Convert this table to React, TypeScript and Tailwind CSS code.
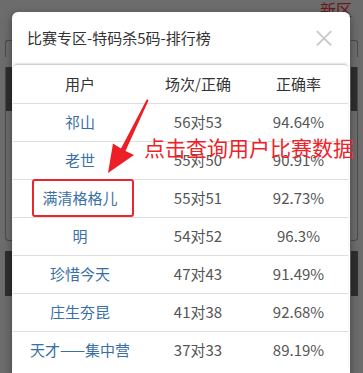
import React from 'react';

interface Rank {
  name: string;
  record: string;
  rate: string;
}

const ranks: Rank[] = [
  { name: '祁山', record: '56对53', rate: '94.64%' },
  { name: '老世', record: '55对50', rate: '90.91%' },
  { name: '满清格格儿', record: '55对51', rate: '92.73%' },
  { name: '明', record: '54对52', rate: '96.3%' },
  { name: '珍惜今天', record: '47对43', rate: '91.49%' },
  { name: '庄生夯昆', record: '41对38', rate: '92.68%' },
  { name: '天才——集中营', record: '37对33', rate: '89.19%' },
];

const font = { fontFamily: '"Noto Sans CJK SC", "Liberation Sans", sans-serif' };

const SideStrip: React.FC<{ side: 'left' | 'right' }> = ({ side }) => (
  <div className={`flex flex-col w-[12px] pt-[40px] ${side === 'left' ? 'pl-[5px]' : 'pr-[5px]'}`}>
    <div className={`h-[17px] border-t border-[#4a4a4a] ${side === 'left' ? 'border-l rounded-tl-[3px]' : 'border-r rounded-tr-[3px]'}`} />
    <div className={`mt-[10px] h-[174px] flex flex-col border-b border-[#4a4a4a] ${side === 'left' ? 'border-l rounded-bl-[4px]' : 'border-r rounded-br-[4px]'}`}>
      <div className="h-[44px] bg-[#2e2e2e]" />
    </div>
    <div className="mt-[10px] h-[45px] bg-[#2e2e2e]" />
  </div>
);

export default function App() {
  return (
    <div className="relative w-[363px] h-[373px] overflow-hidden bg-[#6c6c6c]" style={font}>
      {/* backdrop page */}
      <div className="flex justify-between h-full">
        <SideStrip side="left" />
        <SideStrip side="right" />
      </div>
      <div className="absolute left-[320px] top-[1px] text-[16px] text-[#6a1818] leading-none">新区</div>

      {/* modal */}
      <div className="absolute left-[12px] top-[12px] w-[338px] h-[380px] bg-white rounded-[6px] shadow-[0_3px_9px_rgba(0,0,0,0.4)] flex flex-col">
        <div className="flex items-center justify-between h-[52px] pl-[15px] pr-[14px]">
          <span className="text-[15px] text-[#333]">比赛专区-特码杀5码-排行榜</span>
          <span className="text-[24px] leading-none text-[#c8c8c8] -mt-[2px]">×</span>
        </div>
        <div className="pl-[1px] pr-[2px]">
          <div className="border-t border-[#cfcfcf] rounded-t-[4px] shadow-[0_-1px_2px_rgba(0,0,0,0.12)]">
            <table className="w-[335px] table-fixed border-collapse text-[15px]">
              <colgroup>
                <col className="w-[134px]" />
                <col className="w-[102px]" />
                <col className="w-[99px]" />
              </colgroup>
              <thead>
                <tr className="h-[38px] text-[#333]">
                  <th className="font-normal text-center">用户</th>
                  <th className="font-normal text-center">场次/正确</th>
                  <th className="font-normal text-center">正确率</th>
                </tr>
              </thead>
              <tbody>
                {ranks.map(r => (
                  <tr key={r.name} className="h-[38px] border-t border-[#dddddd]">
                    <td className="text-center text-[#3a6fa6] whitespace-nowrap">{r.name}</td>
                    <td className="text-center text-[#555]">{r.record}</td>
                    <td className="text-center text-[#555]">{r.rate}</td>
                  </tr>
                ))}
              </tbody>
            </table>
          </div>
        </div>
      </div>

      {/* annotation */}
      <div className="absolute left-[32px] top-[179px] w-[102px] h-[38px] border-[2.5px] border-[#e8262b] rounded-[3px]" />
      <svg className="absolute inset-0 pointer-events-none" width="363" height="373" viewBox="0 0 363 373">
        <polygon points="147,99 148.5,100.5 125.5,151 134,155 108,173 113,143.5 121,148.5" fill="#ec1f26" />
      </svg>
      <div className="absolute left-[144px] top-[137px] text-[21px] leading-none text-[#ee2229] whitespace-nowrap">
        点击查询用户比赛数据
      </div>
    </div>
  );
}
